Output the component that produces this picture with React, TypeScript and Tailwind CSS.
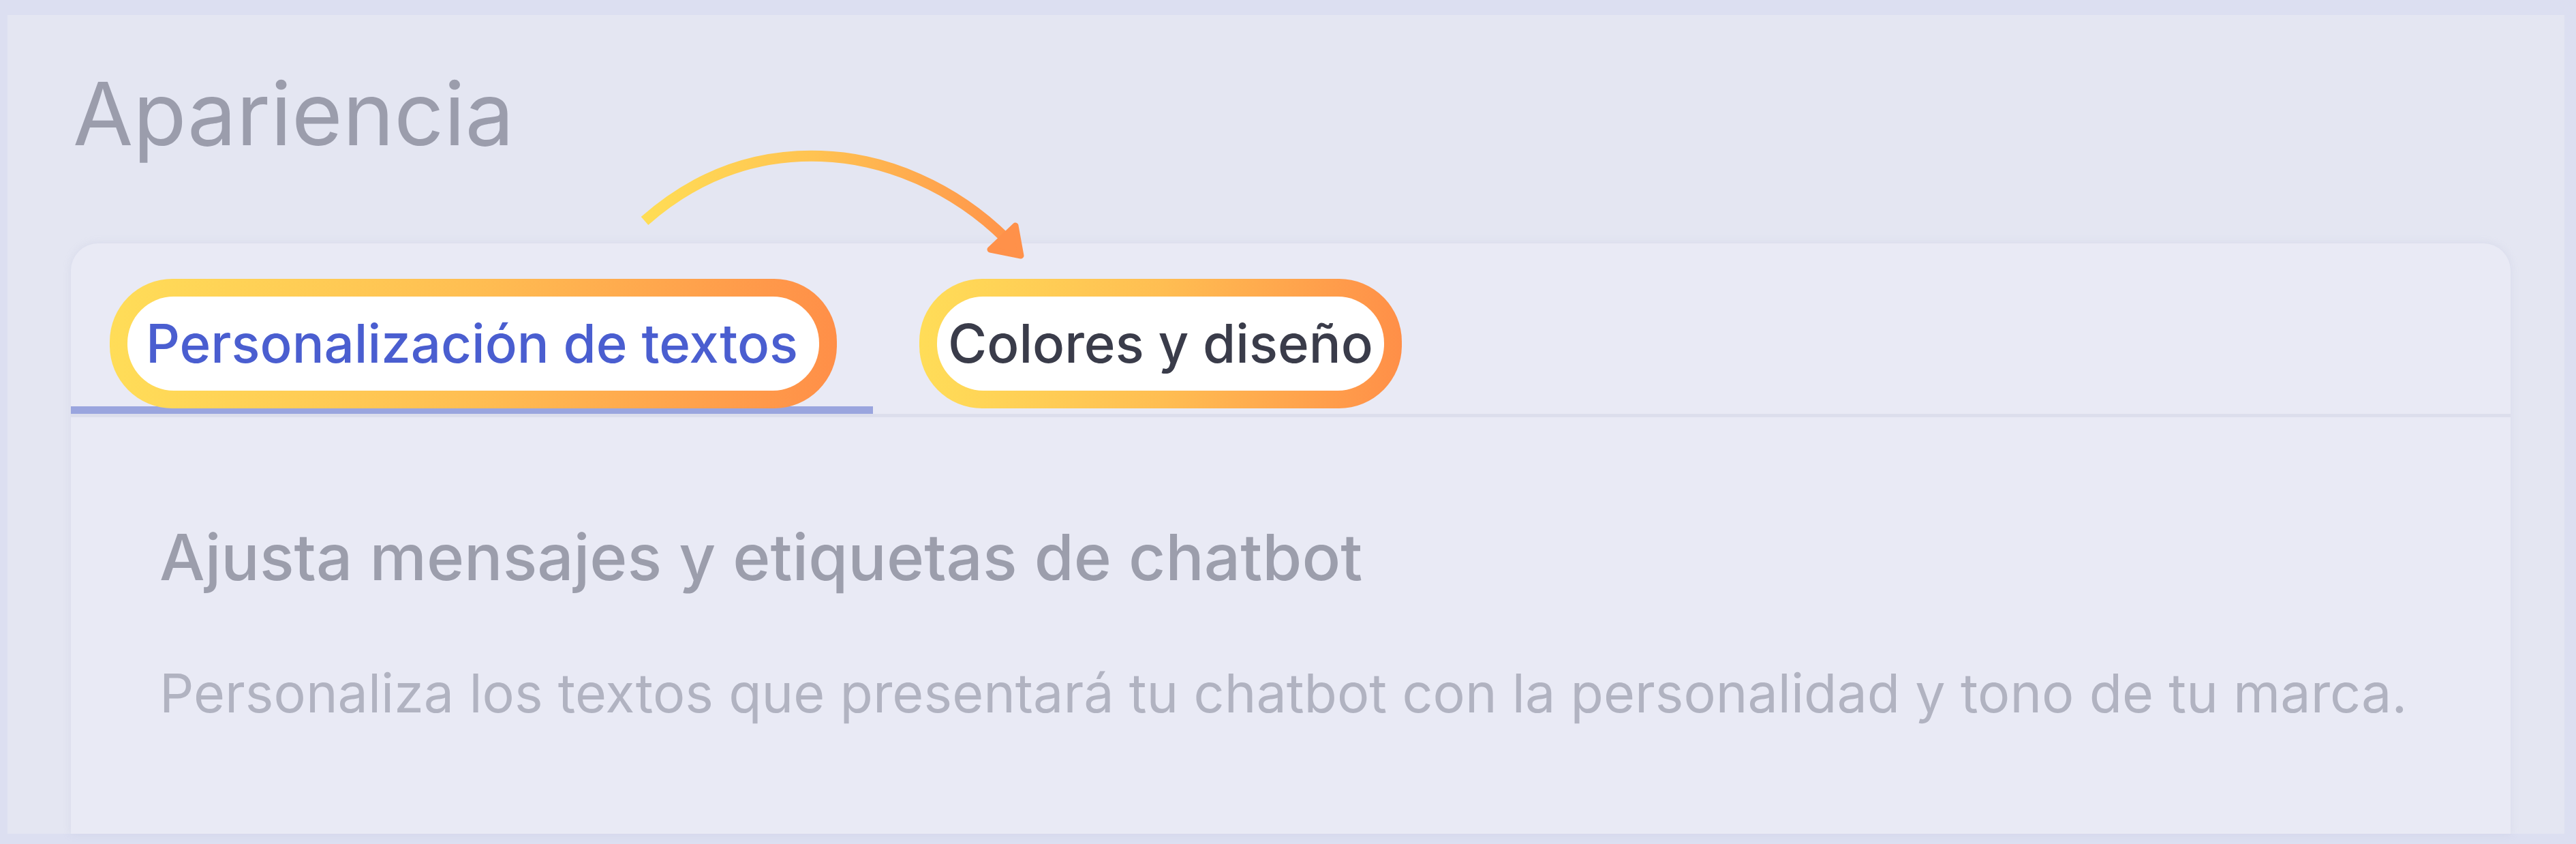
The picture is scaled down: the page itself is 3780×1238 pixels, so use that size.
import React from "react"

type Tab = { id: string; label: string; active?: boolean; ring: string }

const tabs: Tab[] = [
  {
    id: "textos",
    label: "Personalización de textos",
    active: true,
    ring: "-left-[53px] -right-[57px]",
  },
  {
    id: "colores",
    label: "Colores y diseño",
    ring: "-left-[42px] -right-[42px]",
  },
]

function Highlight({ tab }: { tab: Tab }) {
  return (
    <span className="relative inline-block">
      <span
        className={`absolute -bottom-[56px] -top-[56px] rounded-[92px] bg-linear-to-r from-[#ffdd58] via-[#ffbe52] to-[#ff8f48] p-[26px] ${tab.ring}`}
      >
        <span className="block h-full w-full rounded-[68px] bg-white" />
      </span>
      <span
        className={`relative z-10 ${tab.active ? "text-[#4a5ed0]" : "text-[#3a3c4a]"}`}
      >
        {tab.label}
      </span>
    </span>
  )
}

function Arrow() {
  return (
    <svg
      className="pointer-events-none absolute left-0 top-0"
      width="3780"
      height="1238"
      viewBox="0 0 3780 1238"
    >
      <defs>
        <linearGradient id="arrowGrad" gradientUnits="userSpaceOnUse" x1="945" y1="0" x2="1500" y2="0">
          <stop offset="0" stopColor="#ffdd55" />
          <stop offset="0.45" stopColor="#ffc352" />
          <stop offset="1" stopColor="#ff914a" />
        </linearGradient>
      </defs>
      <path
        d="M 946 324 C 1030 250, 1120 226, 1205 229 C 1300 232, 1400 275, 1476 350"
        fill="none"
        stroke="url(#arrowGrad)"
        strokeWidth="16"
      />
      <polygon
        points="1490,331 1498,375 1453,366"
        fill="#ff914a"
        stroke="#ff914a"
        strokeWidth="9"
        strokeLinejoin="round"
      />
    </svg>
  )
}

export default function App() {
  return (
    <div className="relative h-[1238px] w-[3780px] overflow-hidden bg-[#dcdff1] pb-[15px] pl-[11px] pr-[17px] pt-[22px] font-['Inter','Noto_Sans',sans-serif]">
      <div className="flex h-full flex-col bg-[#e4e6f2] pl-[93px] pr-[79px]">
        <h1 className="ml-[3px] mt-[81px] text-[128px] font-normal leading-none text-[#9b9dac]">
          Apariencia
        </h1>

        <div className="mt-[126px] flex-1 rounded-t-[40px] bg-[#e9eaf5] shadow-[0_0_12px_rgba(180,185,215,0.25)]">
          <div className="flex h-[255px] items-end border-b-[5px] border-[#dcdeec]">
            {tabs.map((tab) => (
              <button
                key={tab.id}
                className={`border-b-[11px] px-[110px] pb-[53px] text-[78px] font-medium leading-none ${
                  tab.active ? "border-[#9aa5de]" : "border-transparent"
                }`}
              >
                <Highlight tab={tab} />
              </button>
            ))}
          </div>

          <div className="pl-[130px] pt-[158px]">
            <h2 className="text-[94px] font-medium leading-none text-[#9c9eac]">
              Ajusta mensajes y etiquetas de chatbot
            </h2>
            <p className="mt-[113px] text-[79px] leading-none text-[#b1b3c1]">
              Personaliza los textos que presentará tu chatbot con la personalidad y tono de tu marca.
            </p>
          </div>
        </div>
      </div>

      <Arrow />
    </div>
  )
}
